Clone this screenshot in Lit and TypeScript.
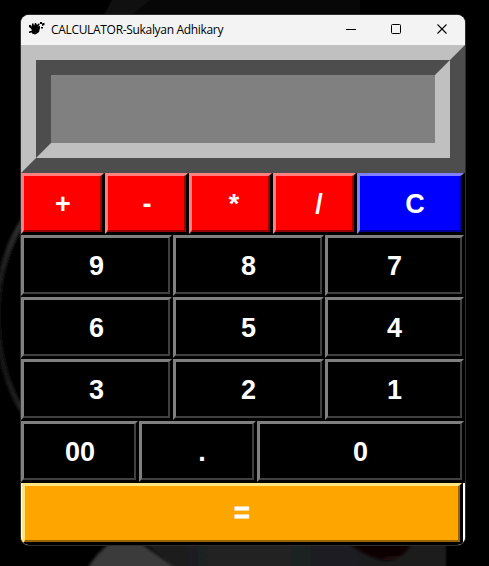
import { LitElement, html, css, svg } from "lit";
import { customElement, property } from "lit/decorators.js";

interface Key { label: string; tone: string; nudge?: number }

const k = (label: string, nudge = 0.4, tone = "black"): Key => ({ label, tone, nudge });

const rows: { layout: string; keys: Key[] }[] = [
  { layout: "ops", keys: [k("+", 1, "red"), k("-", 1, "red"), k("*", 4, "red"), k("/", 5, "red"), k("C", 5, "blue")] },
  { layout: "three", keys: [k("9"), k("8"), k("7")] },
  { layout: "three", keys: [k("6"), k("5"), k("4")] },
  { layout: "three", keys: [k("3"), k("2"), k("1")] },
  { layout: "zeros", keys: [k("00", 1), k(".", 5), k("0")] },
  { layout: "equals", keys: [k("=", 0.5, "orange")] },
];

@customElement("calc-key")
export class CalcKey extends LitElement {
  @property() label = "";
  @property() tone = "black";
  @property({ type: Number }) nudge = 0;

  static styles = css`
    :host { display: block; min-width: 0; padding: 0 1px 1px 0; background: #000; }
    .outer { box-sizing: border-box; height: 100%; border: 2px solid; border-color: var(--hi) #000 #000 var(--hi); background: var(--face); }
    .inner {
      box-sizing: border-box; width: 100%; height: 100%; display: flex; align-items: center; justify-content: center;
      border-style: solid; border-width: 1px 2px 2px 1px; border-color: var(--hi) var(--lo) var(--lo) var(--hi);
      color: #fff; font: bold 27px/30px "Liberation Sans", Arial, sans-serif;
    }
    .label { position: relative; top: 1px; }
    .black { --face: #000; --hi: #808080; --lo: #404040; }
    .red { --face: #f00; --hi: #ff8080; --lo: #990000; }
    .blue { --face: #00f; --hi: #8080ff; --lo: #000099; }
    .orange { --face: #ffa500; --hi: #ffe680; --lo: #996300; }
    .orange .label { top: 0; -webkit-text-stroke: 0.9px #fff; }
  `;

  render() {
    return html`<div class="outer ${this.tone}"><div class="inner"><span class="label" style="left:${this.nudge}px">${this.label}</span></div></div>`;
  }
}

@customElement("app-root")
export class AppRoot extends LitElement {
  static styles = css`
    :host { display: block; position: relative; width: 489px; height: 566px; background: #000; overflow: hidden; }
    .wallpaper { position: absolute; inset: 0; display: block; }
    .stage { position: relative; box-sizing: border-box; padding: 15px 24px 21px 21px; height: 566px; }
    .window {
      height: 530px; border-radius: 8px; overflow: hidden; background: #fff;
    }
    .frame { border-radius: 8px; box-shadow: 0 0 0 1px #2e2e2e; }
    .title { height: 30px; display: flex; align-items: center; background: #f3f3f3; color: #000; }
    .icon { margin-left: 8px; width: 16px; height: 16px; flex: none; position: relative; top: -2px; }
    .name { margin-left: 6px; flex: 1; font: 12px/16px "Open Sans", "Noto Sans", sans-serif; letter-spacing: -0.32px; white-space: nowrap; }
    .controls { display: flex; width: 137px; height: 30px; flex: none; }
    .display {
      box-sizing: border-box; height: 128px; border: 15px solid;
      border-color: #c0c0c0 #4d4d4d #4d4d4d #c0c0c0;
    }
    .screen {
      box-sizing: border-box; height: 98px; border: 15px solid; background: #808080;
      border-color: #4d4d4d #c0c0c0 #c0c0c0 #4d4d4d;
    }
    .row { display: grid; height: 62px; }
    .ops { grid-template-columns: repeat(4, 84px) 1fr; }
    .three { grid-template-columns: 152px 152px 1fr; }
    .zeros { grid-template-columns: 118px 118px 1fr; }
    .equals { padding: 0 2px 0 1px; background: #fff; }
  `;

  render() {
    return html`
      <svg class="wallpaper" width="489" height="566" viewBox="0 0 489 566">
        ${svg`
        <defs>
          <filter id="soft" x="-20%" y="-20%" width="140%" height="140%"><feGaussianBlur stdDeviation="1.6"/></filter>
          <linearGradient id="arc" x1="0" y1="0" x2="0" y2="1">
            <stop offset="0" stop-color="#343434"/><stop offset=".4" stop-color="#141414"/><stop offset=".7" stop-color="#121212"/><stop offset="1" stop-color="#242424"/>
          </linearGradient>
          <linearGradient id="floor" x1="0" x2="1">
            <stop offset="0" stop-color="#18191a"/><stop offset=".3" stop-color="#222324"/><stop offset=".65" stop-color="#1d1e20"/><stop offset="1" stop-color="#1a1b1c"/>
          </linearGradient>
        </defs>
        <path d="M112 0L102 16H360V0Z" fill="#070707"/>
        <path d="M112 0L104 16H130L150 0Z" fill="#101010"/>
        <path d="M465 130V566H489V190Z" fill="#040505" filter="url(#soft)"/>
        <path d="M25 218C-12 270 -12 360 25 415" fill="#030303" stroke="url(#arc)" stroke-width="5" filter="url(#soft)"/>
        <path d="M140 540H446V572H180Z" fill="url(#floor)" filter="url(#soft)"/>
        <path d="M86 572Q94 554 114 540H136L182 572Z" fill="#3a3a3b" filter="url(#soft)"/>
        <path d="M345 540Q362 556 385 561Q405 560 413 540Z" fill="#080505" filter="url(#soft)"/>
        <path d="M384 559L402 557" stroke="#2d1a17" stroke-width="2" filter="url(#soft)"/>`}
      </svg>
      <div class="stage">
        <div class="frame">
          <div class="window">
            <div class="title">
              <svg class="icon" viewBox="0 0 16 16">
                <path d="M0 5H2L3 7V3.5H4.5L5 6L6 3H7L8 5L9.5 3.5H10.5V5L9 6.5L11 6V8L10 12L8 13.5L6 14.5L3 13.5V12.5L0 13V11.5L3 10.5L2 8.5L0 7Z" fill="#000"/>
                <path d="M11 2H13V4H11ZM13.5 3H15.5V5L13 6V4.5ZM12 7H14V8.5H12Z" fill="#000"/>
              </svg>
              <div class="name">CALCULATOR-Sukalyan Adhikary</div>
              <svg class="controls" viewBox="0 0 137 30" fill="none" stroke="#000">
                <path d="M18 14.5H28"/>
                <rect x="63.5" y="9.5" width="9" height="9" rx="1"/>
                <path d="M109.5 9.5L118.5 18.5M118.5 9.5L109.5 18.5" stroke-width="1.1"/>
              </svg>
            </div>
            <div class="display"><div class="screen"></div></div>
            ${rows.map(r => html`<div class="row ${r.layout}">
              ${r.keys.map(x => html`<calc-key .label=${x.label} .tone=${x.tone} .nudge=${x.nudge ?? 0}></calc-key>`)}
            </div>`)}
          </div>
        </div>
      </div>`;
  }
}
